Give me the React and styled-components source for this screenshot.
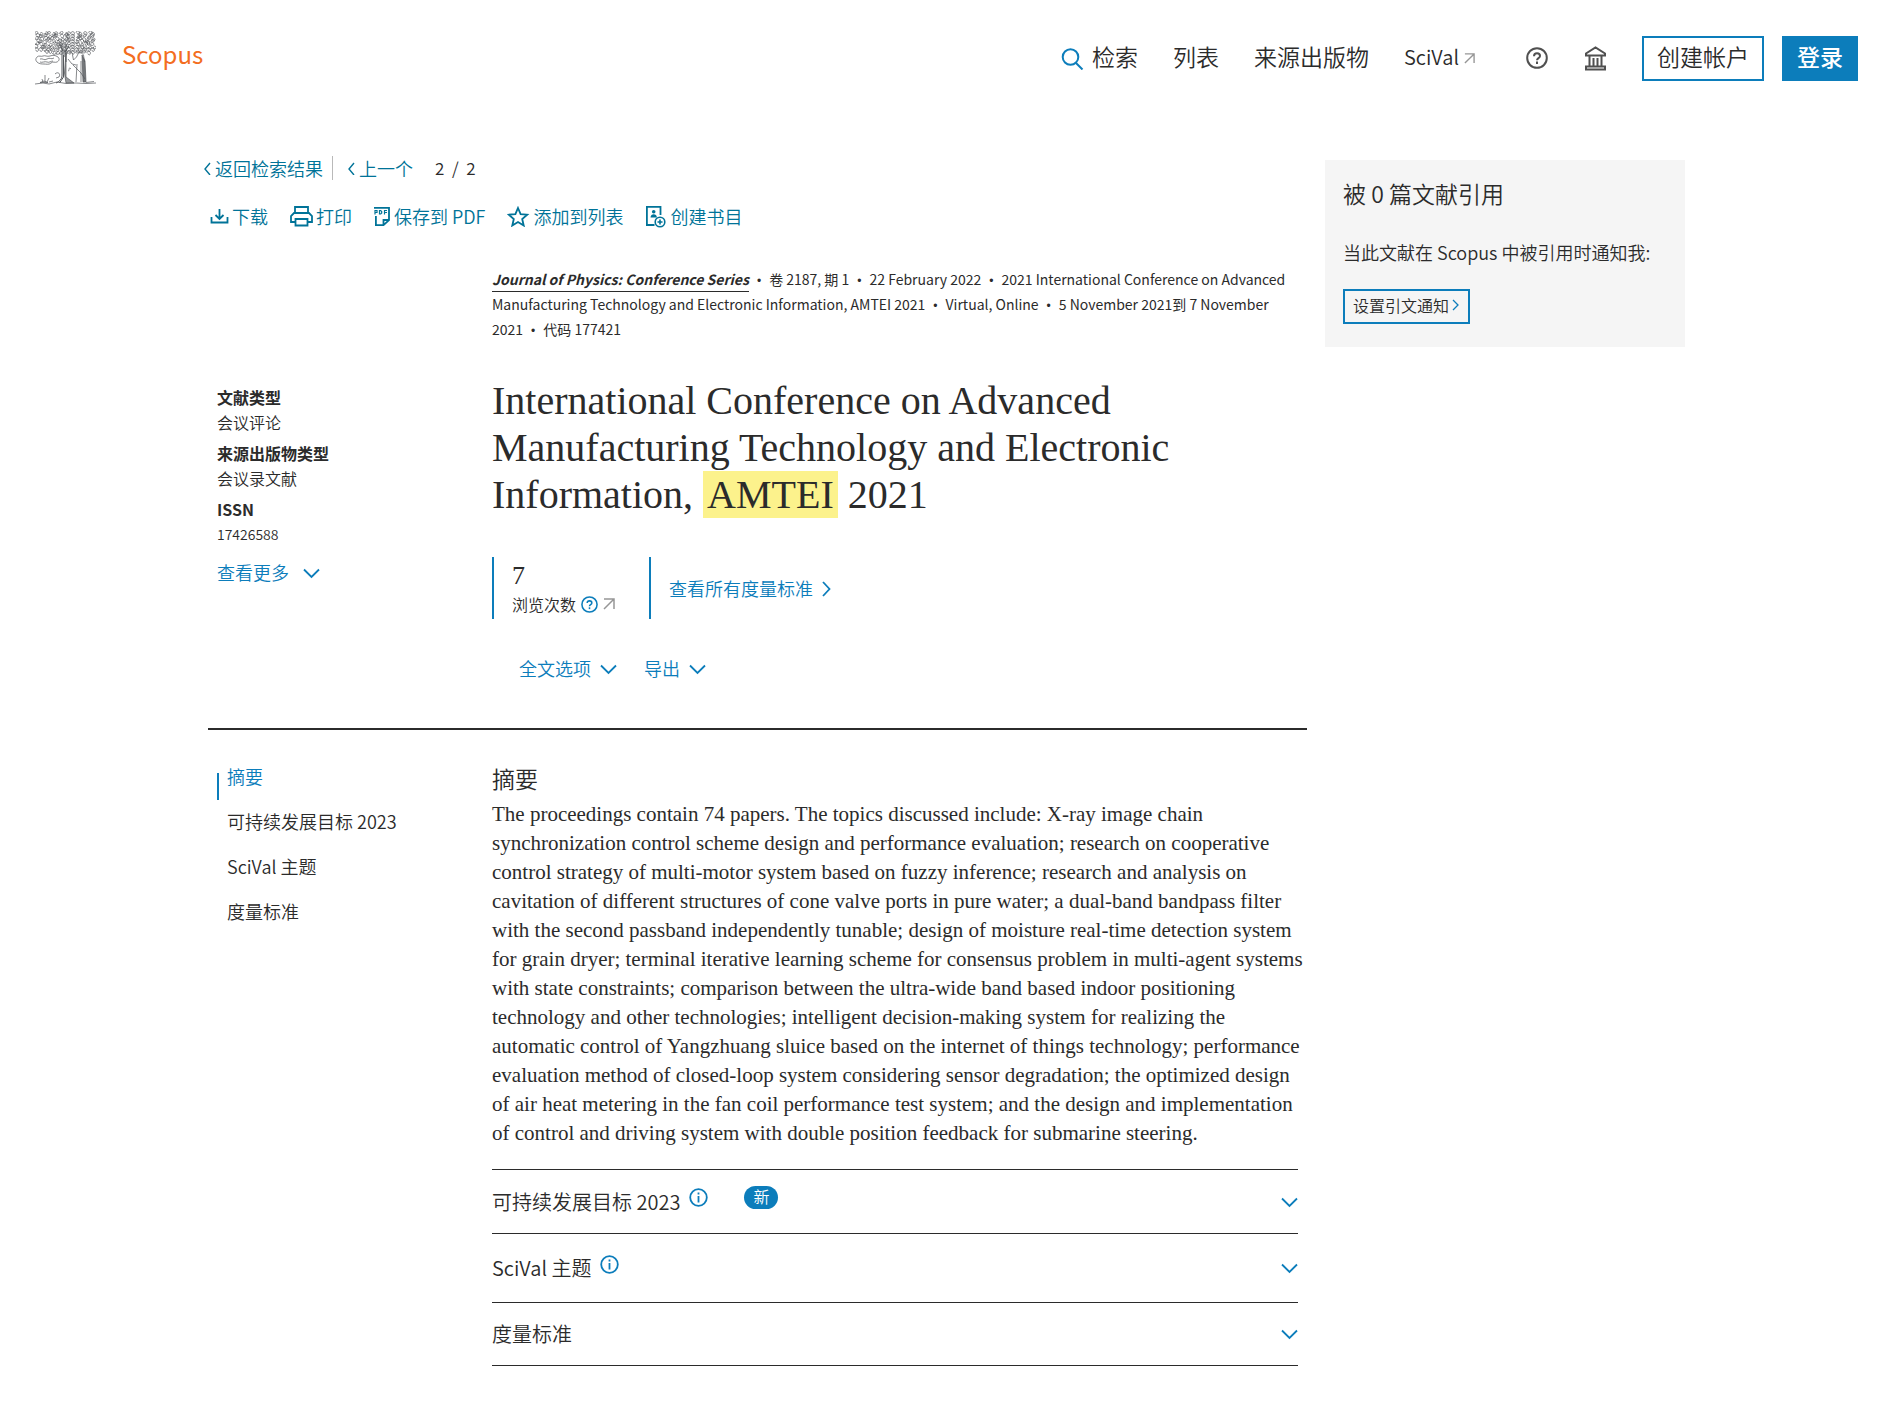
import React from "react";
import styled, { createGlobalStyle, css } from "styled-components";

const SANS = '"Noto Sans CJK SC", "Noto Sans", sans-serif';
const SERIF = '"Liberation Serif", "Noto Sans CJK SC", serif';
const INK = "#2b2b2b";
const BLUE = "#0c7dbb";
const TEAL = "#007398";
const GREY = "#969696";

const GlobalStyle = createGlobalStyle`
  *, *::before, *::after { box-sizing: border-box; }
  body { margin: 0; background: #fff; color: ${INK}; font-family: ${SANS}; font-size: 18px; line-height: 24px; font-weight: 350; }
  h1, h2, h3, p, dl, dt, dd, ul { margin: 0; padding: 0; font-weight: inherit; }
  ul { list-style: none; }
  a { color: inherit; text-decoration: none; }
  button { font: inherit; color: inherit; background: none; border: 0; padding: 0; cursor: pointer; }
  svg { display: block; flex: none; }
`;

const Header = styled.header`
  display: flex;
  align-items: center;
  justify-content: space-between;
  height: 116px;
  padding: 0 35px;
`;

const Brand = styled.a`
  display: flex;
  align-items: center;
  gap: 26px;
`;

const BrandName = styled.span`
  padding-bottom: 8px;
  color: #f36d21;
  font-size: 24px;
  font-weight: 400;
  line-height: 32px;
`;

const TopNav = styled.nav`
  display: flex;
  align-items: center;
  gap: 35px;
  font-size: 23px;
  line-height: 32px;
`;

const NavLink = styled.a`
  display: flex;
  align-items: center;
  gap: ${(p) => p.$gap || 5}px;
`;

const NavText = styled.span`
  padding-bottom: ${(p) => (p.$latin ? 2 : 4)}px;
  font-size: ${(p) => (p.$latin ? 20 : 23)}px;
`;

const IconGroup = styled.div`
  display: flex;
  gap: 36px;
  padding: 0 0 0 16px;
  color: #505050;
`;

const Buttons = styled.div`
  display: flex;
  gap: 18px;
`;

const HeaderButton = styled.button`
  height: 45px;
  padding: 0 13px 4px;
  border: 2px solid ${BLUE};
  ${(p) =>
    p.$primary &&
    css`
      background: ${BLUE};
      color: #fff;
      font-weight: 500;
    `}
`;

const Page = styled.div`
  display: flex;
  align-items: flex-start;
  gap: 18px;
  max-width: 1477px;
  margin: 0 auto;
  padding-bottom: 50px;
`;

const Main = styled.main`
  flex: 1;
  min-width: 0;
  padding-top: 40px;
`;

const Pager = styled.nav`
  display: flex;
  align-items: center;
  margin-left: -5px;
  color: ${TEAL};
`;

const PagerLink = styled.a`
  display: flex;
  align-items: center;
  gap: 4px;
  & + & {
    margin-left: 9px;
    padding-left: 14px;
    border-left: 1px solid #b9b9b9;
  }
`;

const PagerCount = styled.span`
  margin-left: 22px;
  color: ${INK};
  font-size: 17px;
  white-space: pre;
`;

const Tools = styled.div`
  display: flex;
  align-items: center;
  gap: 22px;
  margin: 24px 0 39px;
  padding-left: 1px;
  color: ${TEAL};
`;

const Tool = styled.button`
  display: flex;
  align-items: center;
  gap: 3px;
`;

const Columns = styled.div`
  display: grid;
  grid-template-columns: 275px minmax(0, 1fr);
  padding: 0 9px;
`;

const Source = styled.ul`
  grid-column: 2;
  font-size: 14px;
  line-height: 25px;
  font-weight: 400;
  li {
    display: inline;
  }
  li + li::before {
    content: "•";
    padding: 0 8px;
    font-family: "Liberation Sans", sans-serif;
    font-size: 12px;
    line-height: 12px;
  }
`;

const Journal = styled.a`
  border-bottom: 1px solid ${INK};
  padding-bottom: 2px;
  font-weight: 700;
  font-style: italic;
`;

const Facts = styled.dl`
  font-size: 16px;
  line-height: 25px;
  padding-top: 8px;
  dt {
    font-weight: 700;
  }
  dd + dt {
    margin-top: 6px;
  }
  dd:last-child {
    font-size: 14px;
  }
`;

const Toggle = styled.button`
  display: flex;
  align-items: center;
  gap: ${(p) => p.$gap || 9}px;
  color: ${BLUE};
  svg {
    margin-top: 2px;
  }
`;

const Side = styled.div`
  display: flex;
  flex-direction: column;
  align-items: flex-start;
  gap: 12px;
`;

const Summary = styled(Columns)`
  padding-top: 35px;
  padding-bottom: 47px;
  border-bottom: 2px solid ${INK};
`;

const Title = styled.h1`
  font-family: ${SERIF};
  font-size: 40px;
  line-height: 47px;
  font-weight: 400;
`;

const Mark = styled.mark`
  display: inline-block;
  padding: 0 4px;
  background: #fcf28c;
  color: inherit;
`;

const Metrics = styled.div`
  display: flex;
  margin-top: 39px;
`;

const Metric = styled.div`
  display: flex;
  flex-direction: column;
  justify-content: center;
  min-width: 157px;
  height: 62px;
  padding-left: 18px;
  border-left: 2px solid ${BLUE};
`;

const MetricValue = styled.span`
  font-family: ${SERIF};
  font-size: 26px;
  line-height: 32px;
`;

const MetricLabel = styled.span`
  display: flex;
  align-items: center;
  gap: 5px;
  font-size: 16px;
`;

const HelpButton = styled.button`
  color: ${BLUE};
`;

const Menus = styled.div`
  display: flex;
  gap: 27px;
  margin: 36px 0 0 27px;
`;

const Details = styled(Columns)`
  padding-top: 34px;
`;

const Contents = styled.nav`
  display: flex;
  flex-direction: column;
  gap: 9px;
`;

const ContentsLink = styled.a`
  padding: 0 0 12px 10px;
  ${(p) =>
    p.$active &&
    css`
      color: ${BLUE};
      background: linear-gradient(${BLUE}, ${BLUE}) 0 100% / 2px 27px no-repeat;
    `}
`;

const SectionTitle = styled.h2`
  font-size: 23px;
  line-height: 28px;
`;

const Abstract = styled.p`
  margin: 8px -9px 21px 0;
  font-family: ${SERIF};
  font-size: 21px;
  line-height: 29px;
  font-weight: 400;
`;

const Panel = styled.section`
  display: flex;
  align-items: center;
  height: ${(p) => (p.$tall ? 69 : 64)}px;
  border-top: 1px solid ${INK};
  &:last-child {
    height: 64px;
    border-bottom: 1px solid ${INK};
  }
`;

const PanelTitle = styled.h3`
  font-size: 20px;
  line-height: 28px;
`;

const IconButton = styled.button`
  margin: 0 0 8px 9px;
  color: ${BLUE};
`;

const Badge = styled.span`
  margin: 0 0 8px 36px;
  padding: 0 9px 3px;
  border-radius: 12px;
  background: ${BLUE};
  color: #fff;
  font-size: 16px;
  line-height: 20px;
`;

const PanelToggle = styled.button`
  margin-left: auto;
  color: ${BLUE};
`;

const Card = styled.aside`
  flex: none;
  width: 360px;
  margin-top: 44px;
  padding: 19px 18px 23px;
  background: #f5f5f5;
`;

const CardTitle = styled.h2`
  font-size: 23px;
  line-height: 28px;
`;

const CardText = styled.p`
  margin: 33px 0 25px;
`;

const AlertButton = styled.button`
  display: flex;
  align-items: center;
  gap: 3px;
  height: 35px;
  padding: 0 9px 4px 8px;
  border: 2px solid ${BLUE};
  font-size: 16px;
`;

const Line = ({ w, h, box, children, stroke = "currentColor", sw = 2 }) => (
  <svg width={w} height={h} viewBox={box || `0 0 ${w} ${h}`} fill="none" stroke={stroke} strokeWidth={sw} aria-hidden="true">
    {children}
  </svg>
);

const ChevronDown = () => <Line w={17} h={24} sw={1.8}><path d="M1 8.500l7.500 7.500L16 8.500" /></Line>;
const ChevronRight = () => <Line w={9} h={16} sw={1.800}><path d="M1 1l6.500 7L1 15" /></Line>;
const SmallRight = () => <Line w={7} h={12} sw={1.300} stroke={BLUE}><path d="M1 1l5 5-5 5" /></Line>;
const SmallLeft = () => <Line w={8} h={14} sw={1.400}><path d="M7 2L2 8l5 6" /></Line>;
const External = ({ size = 12 }) => <Line w={size} h={size} box="0 0 12 12" stroke={GREY} sw={1.500}><path d="M1 1h10v10M11 1L1 11" /></Line>;
const Question = ({ size }) => (
  <Line w={size} h={size} box="0 0 22 22">
    <circle cx="11" cy="11" r="9.800" />
    <path d="M8 9.200C8 7.300 9.200 6.300 11 6.300s3 1 3 2.600c0 2.200-3 2.200-3 4.300" />
    <path d="M11 14.600v2.400" />
  </Line>
);
const Info = () => (
  <Line w={19} h={19} sw={1.800}>
    <circle cx="9.500" cy="9.500" r="8.300" />
    <path d="M9.500 8v6.500M9.500 4.600v2" />
  </Line>
);

const ElsevierTree = () => {
  const leaves = [];
  for (let r = 0; r < 8; r += 1) {
    for (let c = 0; c < 15; c += 1) {
      const n = (r * 37 + c * 53 + r * c * 11) % 17;
      const x = 2.5 + c * 4 + ((n % 5) - 2) * 0.6;
      const y = 2.5 + r * 2.7 + ((n % 3) - 1) * 0.7;
      if (r === 7 && (c < 2 || c > 13)) continue;
      leaves.push(
        n % 2
          ? `M${x - 2} ${y}c0-2.500 3.500-2.500 3.500 0s-2.500 2-2.500 .4`
          : `M${x - 1} ${y - 1.6}c2.800-.6 3.500 2.600 .8 2.800s-2.300-1.600-.5-1.500`
      );
    }
  }
  return (
    <svg width="61" height="54" viewBox="0 0 61 54" fill="none" stroke="#53565a" strokeWidth=".7" role="img" aria-label="Elsevier">
      <path d={leaves.join("")} />
      <path d="M2 26c2-2 4 0 6-1s4 1 7 0 5-1 8 1c2 2 1 4-1 5s-4-1-6 1-5 1-7 1-5 0-7-2-1-4 0-5zM5 28c3-1 4 2 7 0s4 1 7-1M5 31c2 1 5-1 7 0s4-1 6-1" />
      <path d="M27 12v33c0 3-3 6-6 7M31 13v18M29 18v8M25 14l3 6M34 15l-4 6M28.500 24v22l-4 6" strokeWidth="1" />
      <path d="M31 21v25l8 6h-8l-1.500-10z" fill="#53565a" fillOpacity=".6" />
      <path d="M34 22c2-2 4 0 3.500 2l1 5 3-3 2-4 2-1 3 3 1 7M33 28l4 5 4 1M36 38c-3-3-1 2-3 2M42 33l-1 18M46 30v21M38 34l8 8 4 6" />
      <path d="M47 24l3 6 1 21h-3l-.5-14z" fill="#53565a" fillOpacity=".8" />
      <path d="M0 53l8-1 6 1 8-2 9 1.500 10-.5 10 .5 10-.5M51 51.500l8-1M10 51v-7M8 51l-1-3M12 51l2-4M14 51l4-1M20 43c3-3 6 0 4 3M24 46l-3 1M5 51.500l4-1.500 4 1.500z" />
    </svg>
  );
};

const SearchIcon = () => <Line w={23} h={23} stroke={BLUE} sw={2}><circle cx="9.500" cy="10" r="7.800" /><path d="M15 16l6.500 6.500" /></Line>;
const BankIcon = () => (
  <Line w={23} h={25}>
    <path d="M2 9.500V7.500l9.500-6 9.500 6v2zM5.500 10v10M9.500 12v8M13.500 12v8M17.500 10v10M2 23.500v-3h19v3z" />
  </Line>
);
const DownloadIcon = () => <Line w={20} h={18} sw={1.800}><path d="M10.500 2v10M6.500 8l4 4 4-4M2.500 10v5.500h16V10" /></Line>;
const PrintIcon = () => <Line w={23} h={21} sw={1.800}><path d="M5 7V1h13v6M5 16H1v-6l3-3h15l3 3v6h-4M5.500 13h12v6.500h-12z" /></Line>;
const PdfIcon = () => (
  <svg width="17" height="21" viewBox="0 0 17 21" fill="none" stroke="currentColor" strokeWidth="1.800" aria-hidden="true">
    <path d="M1.900 10v9.100h7.600l5.500-5V1.900H0M15 14H9.500v5" />
    <path d="M1 8.500v-4h2v2H1M5.500 4.500v3.500h1.200l1-1V5.500l-1-1zM10.500 8.500v-4h2.500M10.500 6.500H13" strokeWidth="1.200" />
  </svg>
);
const StarIcon = () => <Line w={23} h={21} sw={1.800}><path d="M11 2l2.600 6.200 6.600.5-5 4.300 1.500 6.500L11 16l-5.700 3.500L6.800 13l-5-4.300 6.600-.5z" /></Line>;
const BibIcon = () => (
  <Line w={22} h={23}>
    <path d="M9.500 20H1.900V1.900h13.600V10" strokeWidth="1.800" />
    <circle cx="8.700" cy="6.800" r="1.800" fill="currentColor" stroke="none" />
    <path d="M5.500 12.500c0-4.500 6.400-4.500 6.400 0z" fill="currentColor" stroke="none" />
    <circle cx="15" cy="17" r="4.800" strokeWidth="1.600" />
    <path d="M15 14.500v5M12.500 17h5" strokeWidth="1.600" />
  </Line>
);

export default function App() {
  return (
    <>
      <GlobalStyle />
      <Header>
        <Brand href="#">
          <ElsevierTree />
          <BrandName>Scopus</BrandName>
        </Brand>
        <TopNav>
          <NavLink href="#" $gap={8}><SearchIcon /><NavText>检索</NavText></NavLink>
          <NavLink href="#"><NavText>列表</NavText></NavLink>
          <NavLink href="#"><NavText>来源出版物</NavText></NavLink>
          <NavLink href="#"><NavText $latin>SciVal</NavText><External size={11} /></NavLink>
          <IconGroup>
            <button aria-label="帮助"><Question size={22} /></button>
            <button aria-label="机构"><BankIcon /></button>
          </IconGroup>
          <Buttons>
            <HeaderButton>创建帐户</HeaderButton>
            <HeaderButton $primary>登录</HeaderButton>
          </Buttons>
        </TopNav>
      </Header>
      <Page>
        <Main>
          <Pager>
            <PagerLink href="#"><SmallLeft />返回检索结果</PagerLink>
            <PagerLink href="#"><SmallLeft />上一个</PagerLink>
            <PagerCount>{"2  /  2"}</PagerCount>
          </Pager>
          <Tools>
            <Tool><DownloadIcon />下载</Tool>
            <Tool><PrintIcon />打印</Tool>
            <Tool><PdfIcon />保存到 PDF</Tool>
            <Tool><StarIcon />添加到列表</Tool>
            <Tool><BibIcon />创建书目</Tool>
          </Tools>
          <Columns>
            <Source>
              <li><Journal href="#">Journal of Physics: Conference Series</Journal></li>
              <li>卷 2187, 期 1</li>
              <li>22 February 2022</li>
              <li>2021 International Conference on Advanced Manufacturing Technology and Electronic Information, AMTEI 2021</li>
              <li>Virtual, Online</li>
              <li>5 November 2021到 7 November<br />2021</li>
              <li>代码 177421</li>
            </Source>
          </Columns>
          <Summary>
            <Side>
              <Facts>
                <dt>文献类型</dt>
                <dd>会议评论</dd>
                <dt>来源出版物类型</dt>
                <dd>会议录文献</dd>
                <dt>ISSN</dt>
                <dd>17426588</dd>
              </Facts>
              <Toggle $gap={14}>查看更多<ChevronDown /></Toggle>
            </Side>
            <div>
              <Title>
                International Conference on Advanced Manufacturing Technology and Electronic Information, <Mark>AMTEI</Mark> 2021
              </Title>
              <Metrics>
                <Metric>
                  <MetricValue>7</MetricValue>
                  <MetricLabel>
                    浏览次数
                    <HelpButton aria-label="帮助"><Question size={17} /></HelpButton>
                    <External />
                  </MetricLabel>
                </Metric>
                <Metric>
                  <Toggle>查看所有度量标准<ChevronRight /></Toggle>
                </Metric>
              </Metrics>
              <Menus>
                <Toggle>全文选项<ChevronDown /></Toggle>
                <Toggle>导出<ChevronDown /></Toggle>
              </Menus>
            </div>
          </Summary>
          <Details>
            <Contents>
              <ContentsLink href="#" $active>摘要</ContentsLink>
              <ContentsLink href="#">可持续发展目标 2023</ContentsLink>
              <ContentsLink href="#">SciVal 主题</ContentsLink>
              <ContentsLink href="#">度量标准</ContentsLink>
            </Contents>
            <div>
              <SectionTitle>摘要</SectionTitle>
              <Abstract>
                The proceedings contain 74 papers. The topics discussed include: X-ray image chain<br />
                synchronization control scheme design and performance evaluation; research on cooperative<br />
                control strategy of multi-motor system based on fuzzy inference; research and analysis on<br />
                cavitation of different structures of cone valve ports in pure water; a dual-band bandpass filter<br />
                with the second passband independently tunable; design of moisture real-time detection system<br />
                for grain dryer; terminal iterative learning scheme for consensus problem in multi-agent systems<br />
                with state constraints; comparison between the ultra-wide band based indoor positioning<br />
                technology and other technologies; intelligent decision-making system for realizing the<br />
                automatic control of Yangzhuang sluice based on the internet of things technology; performance<br />
                evaluation method of closed-loop system considering sensor degradation; the optimized design<br />
                of air heat metering in the fan coil performance test system; and the design and implementation<br />
                of control and driving system with double position feedback for submarine steering.
              </Abstract>
              <Panel>
                <PanelTitle>可持续发展目标 2023</PanelTitle>
                <IconButton aria-label="信息"><Info /></IconButton>
                <Badge>新</Badge>
                <PanelToggle aria-label="展开"><ChevronDown /></PanelToggle>
              </Panel>
              <Panel $tall>
                <PanelTitle>SciVal 主题</PanelTitle>
                <IconButton aria-label="信息"><Info /></IconButton>
                <PanelToggle aria-label="展开"><ChevronDown /></PanelToggle>
              </Panel>
              <Panel>
                <PanelTitle>度量标准</PanelTitle>
                <PanelToggle aria-label="展开"><ChevronDown /></PanelToggle>
              </Panel>
            </div>
          </Details>
        </Main>
        <Card>
          <CardTitle>被 0 篇文献引用</CardTitle>
          <CardText>当此文献在 Scopus 中被引用时通知我:</CardText>
          <AlertButton>设置引文通知<SmallRight /></AlertButton>
        </Card>
      </Page>
    </>
  );
}
